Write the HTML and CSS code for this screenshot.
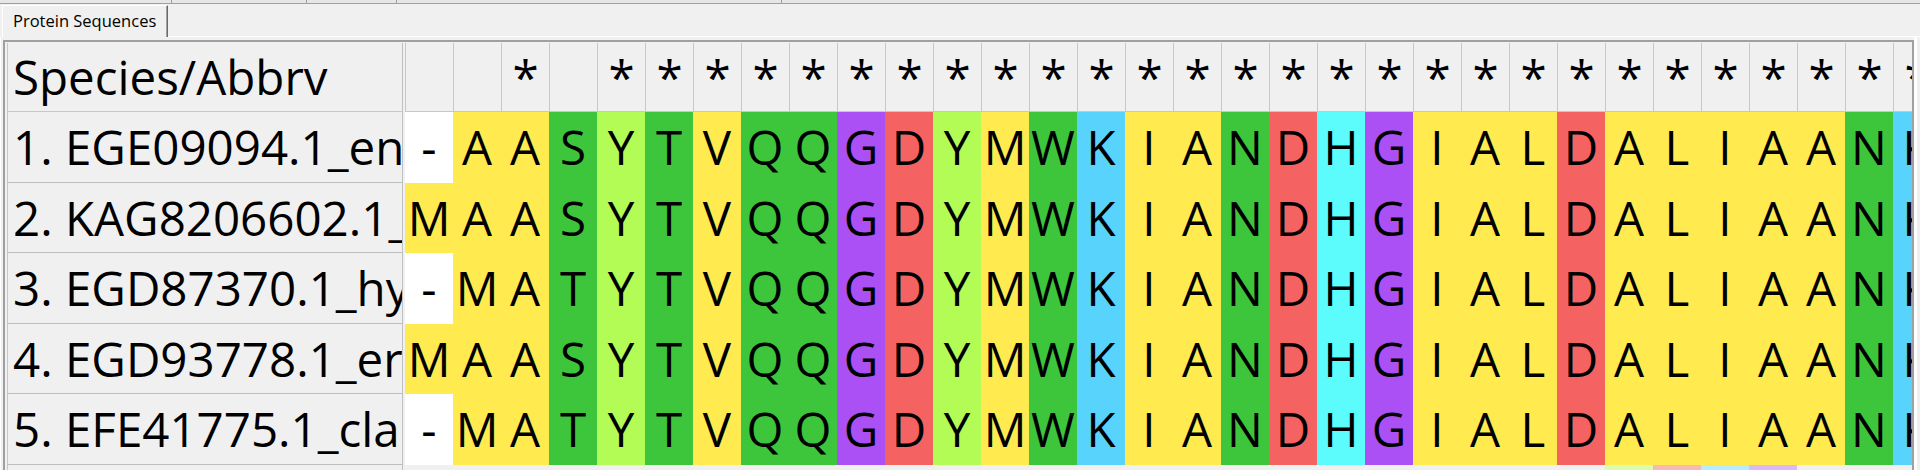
FILE: index.html
```html
<!DOCTYPE html>
<html lang="en">
<head>
<meta charset="utf-8">
<title>Protein Sequences</title>
<link rel="stylesheet" href="styles.css">
</head>
<body>
<div class="topstrip"><span class="s1"></span><span class="s2"></span><span class="s3"></span><span class="s4"></span><span class="s5"></span></div>
<div class="tabbar">
  <div class="tab">Protein Sequences</div>
  <div class="tabfill"></div>
</div>
<div class="pane">
  <div class="frame">
    <div class="table">
      <span class="hn">Species/Abbrv</span><span class="hc"></span><span class="hc"></span><span class="hc">*</span><span class="hc"></span><span class="hc">*</span><span class="hc">*</span><span class="hc">*</span><span class="hc">*</span><span class="hc">*</span><span class="hc">*</span><span class="hc">*</span><span class="hc">*</span><span class="hc">*</span><span class="hc">*</span><span class="hc">*</span><span class="hc">*</span><span class="hc">*</span><span class="hc">*</span><span class="hc">*</span><span class="hc">*</span><span class="hc">*</span><span class="hc">*</span><span class="hc">*</span><span class="hc">*</span><span class="hc">*</span><span class="hc">*</span><span class="hc">*</span><span class="hc">*</span><span class="hc">*</span><span class="hc">*</span><span class="hc">*</span><span class="hc">*</span>

      <span class="lbl">1. EGE09094.1_en</span><span class="d w">-</span><span class="d y">A</span><span class="d y">A</span><span class="d g">S</span><span class="d lg">Y</span><span class="d g">T</span><span class="d y">V</span><span class="d g">Q</span><span class="d g">Q</span><span class="d p">G</span><span class="d r">D</span><span class="d lg">Y</span><span class="d y">M</span><span class="d g">W</span><span class="d b">K</span><span class="d y">I</span><span class="d y">A</span><span class="d g">N</span><span class="d r">D</span><span class="d c">H</span><span class="d p">G</span><span class="d y">I</span><span class="d y">A</span><span class="d y">L</span><span class="d r">D</span><span class="d y">A</span><span class="d y">L</span><span class="d y">I</span><span class="d y">A</span><span class="d y">A</span><span class="d g">N</span><span class="d b">K</span>

      <span class="lbl">2. KAG8206602.1_</span><span class="d y">M</span><span class="d y">A</span><span class="d y">A</span><span class="d g">S</span><span class="d lg">Y</span><span class="d g">T</span><span class="d y">V</span><span class="d g">Q</span><span class="d g">Q</span><span class="d p">G</span><span class="d r">D</span><span class="d lg">Y</span><span class="d y">M</span><span class="d g">W</span><span class="d b">K</span><span class="d y">I</span><span class="d y">A</span><span class="d g">N</span><span class="d r">D</span><span class="d c">H</span><span class="d p">G</span><span class="d y">I</span><span class="d y">A</span><span class="d y">L</span><span class="d r">D</span><span class="d y">A</span><span class="d y">L</span><span class="d y">I</span><span class="d y">A</span><span class="d y">A</span><span class="d g">N</span><span class="d b">K</span>

      <span class="lbl">3. EGD87370.1_hy</span><span class="d w">-</span><span class="d y">M</span><span class="d y">A</span><span class="d g">T</span><span class="d lg">Y</span><span class="d g">T</span><span class="d y">V</span><span class="d g">Q</span><span class="d g">Q</span><span class="d p">G</span><span class="d r">D</span><span class="d lg">Y</span><span class="d y">M</span><span class="d g">W</span><span class="d b">K</span><span class="d y">I</span><span class="d y">A</span><span class="d g">N</span><span class="d r">D</span><span class="d c">H</span><span class="d p">G</span><span class="d y">I</span><span class="d y">A</span><span class="d y">L</span><span class="d r">D</span><span class="d y">A</span><span class="d y">L</span><span class="d y">I</span><span class="d y">A</span><span class="d y">A</span><span class="d g">N</span><span class="d b">K</span>

      <span class="lbl">4. EGD93778.1_er</span><span class="d y">M</span><span class="d y">A</span><span class="d y">A</span><span class="d g">S</span><span class="d lg">Y</span><span class="d g">T</span><span class="d y">V</span><span class="d g">Q</span><span class="d g">Q</span><span class="d p">G</span><span class="d r">D</span><span class="d lg">Y</span><span class="d y">M</span><span class="d g">W</span><span class="d b">K</span><span class="d y">I</span><span class="d y">A</span><span class="d g">N</span><span class="d r">D</span><span class="d c">H</span><span class="d p">G</span><span class="d y">I</span><span class="d y">A</span><span class="d y">L</span><span class="d r">D</span><span class="d y">A</span><span class="d y">L</span><span class="d y">I</span><span class="d y">A</span><span class="d y">A</span><span class="d g">N</span><span class="d b">K</span>

      <span class="lbl">5. EFE41775.1_cla</span><span class="d w">-</span><span class="d y">M</span><span class="d y">A</span><span class="d g">T</span><span class="d lg">Y</span><span class="d g">T</span><span class="d y">V</span><span class="d g">Q</span><span class="d g">Q</span><span class="d p">G</span><span class="d r">D</span><span class="d lg">Y</span><span class="d y">M</span><span class="d g">W</span><span class="d b">K</span><span class="d y">I</span><span class="d y">A</span><span class="d g">N</span><span class="d r">D</span><span class="d c">H</span><span class="d p">G</span><span class="d y">I</span><span class="d y">A</span><span class="d y">L</span><span class="d r">D</span><span class="d y">A</span><span class="d y">L</span><span class="d y">I</span><span class="d y">A</span><span class="d y">A</span><span class="d g">N</span><span class="d b">K</span>

      <span class="lbl"></span><span class="skip"></span><span class="d plg"></span><span class="d pr"></span><span class="d pb"></span><span class="d pp"></span>
    </div>
  </div>
</div>
</body>
</html>
```

FILE: styles.css
```css
* { box-sizing: border-box; }

body {
  margin: 0;
  width: 1920px;
  height: 470px;
  overflow: hidden;
  background: #f0f0f0;
  font-family: "Open Sans", "Noto Sans", sans-serif;
  color: #000;
}

.topstrip {
  display: flex;
  height: 4px;
  border-bottom: 1px solid #a0a0a0;
  background: #e6e6e6;
}
.topstrip span { height: 3px; border-right: 1px solid #a0a0a0; }
.topstrip .s1 { width: 172px; }
.topstrip .s2 { width: 135px; }
.topstrip .s3 { width: 90px; }
.topstrip .s4 { width: 385px; }
.topstrip .s5 { flex: 1; border-right: none; }

.tabbar { display: flex; height: 33px; }
.tab {
  width: 166px;
  height: 32px;
  margin: 1px 0 0 2px;
  border-top: 1px solid #fff;
  border-left: 1px solid #fff;
  border-right: 1px solid #696969;
  box-shadow: inset -1px 0 0 #a0a0a0;
  padding-left: 10px;
  font-size: 16.5px;
  line-height: 30px;
  white-space: nowrap;
}
.tabfill { flex: 1; border-bottom: 1px solid #fff; }

.pane {
  width: 1917px;
  height: 433px;
  border-left: 1px solid #fff;
  border-right: 3px solid #fff;
  padding: 3px 0 0 2px;
}
.frame {
  height: 430px;
  border-top: 2px solid #a0a0a0;
  border-left: 2px solid #a0a0a0;
  border-right: 2px solid #a0a0a0;
  padding: 1px 0 0 2px;
  overflow: hidden;
}

.table {
  display: grid;
  grid-template-columns: 398px repeat(32, 48px);
  grid-template-rows: 69px repeat(6, 70.5px);
  font-size: 47.5px;
}

.hn {
  margin-right: 2px;
  border-left: 1px solid #c8c8c8;
  border-right: 1px solid #c0c0c0;
  border-bottom: 1px solid #c8c8c8;
  padding-left: 5px;
  line-height: 68px;
  white-space: nowrap;
  overflow: hidden;
}
.hc {
  border-left: 1px solid #c8c8c8;
  border-bottom: 1px solid #c8c8c8;
  text-align: center;
  line-height: 68px;
}

.lbl {
  margin-right: 2px;
  border-left: 1px solid #c8c8c8;
  border-right: 1px solid #c0c0c0;
  border-bottom: 1px solid #bdbdbd;
  padding-left: 5px;
  line-height: 69.5px;
  white-space: nowrap;
  overflow: hidden;
}

.d { text-align: center; line-height: 70.5px; }
.skip { grid-column: span 25; }

.w { background: #ffffff; }
.y { background: #ffeb50; }
.g { background: #3dc63c; }
.lg { background: #b3fb55; }
.p { background: #aa50f5; }
.r { background: #f46262; }
.b { background: #58d3fc; }
.c { background: #5cfcfc; }

.plg { background: #d8fcb0; }
.pr { background: #f8b8b8; }
.pb { background: #b8ecfc; }
.pp { background: #dcb8fa; }
```
